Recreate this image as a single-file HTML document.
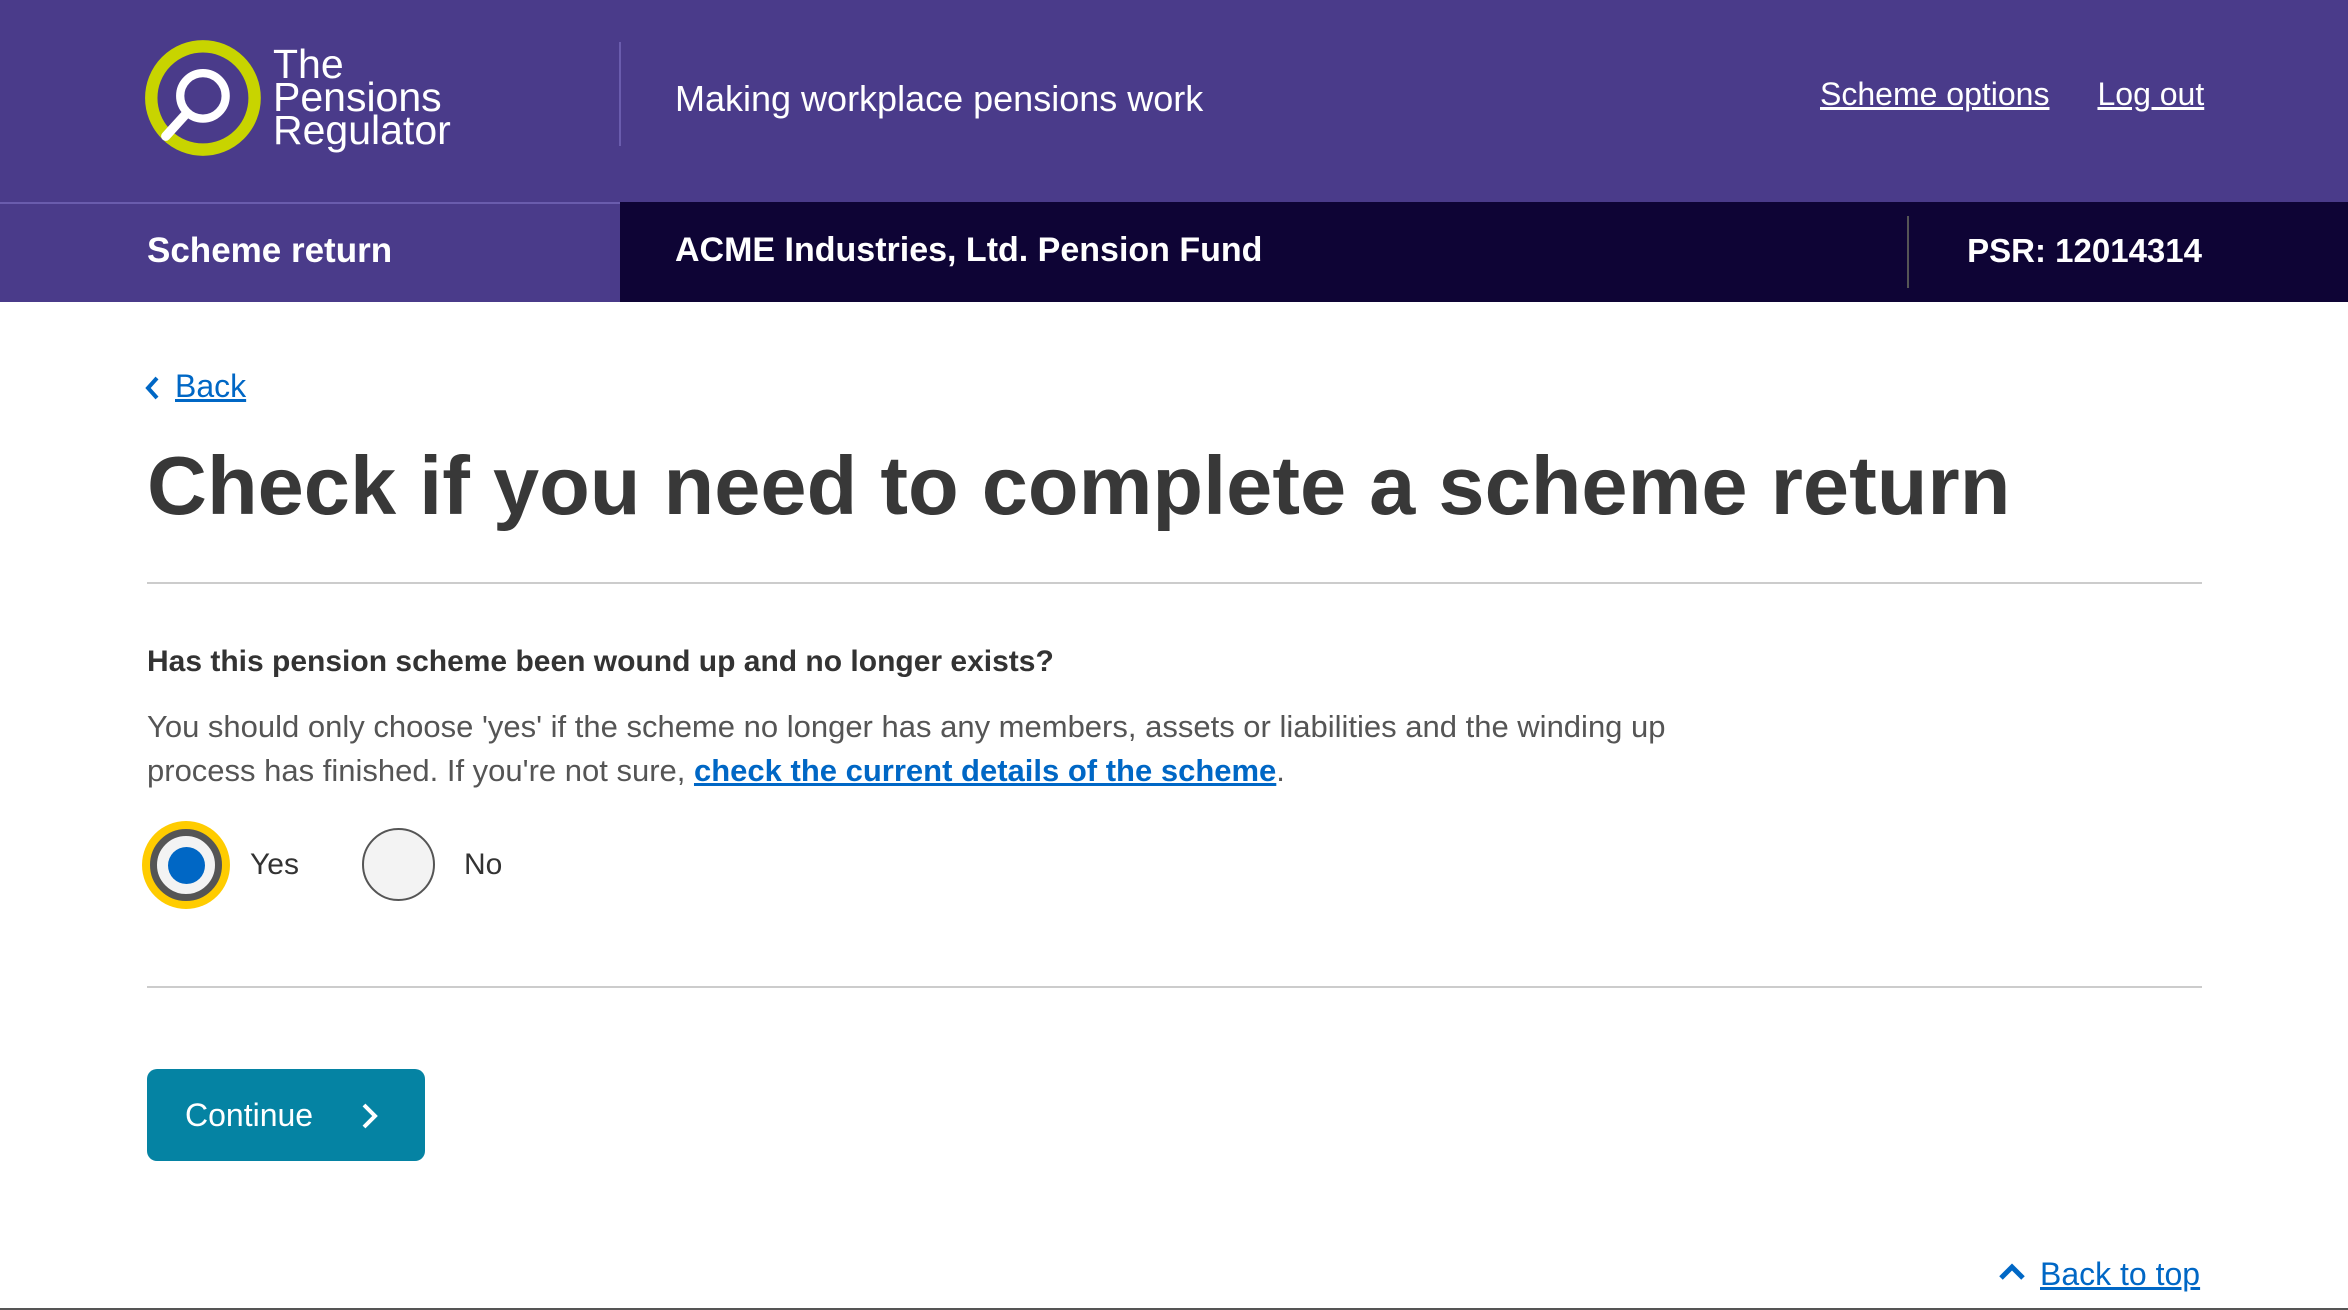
<!DOCTYPE html>
<html><head><meta charset="utf-8"><style>
*{margin:0;padding:0;box-sizing:border-box}
body{width:2348px;height:1310px;position:relative;overflow:hidden;background:#fff;font-family:"Liberation Sans",sans-serif;color:#333}
.a{position:absolute;white-space:nowrap}
a{color:#0067c5;text-decoration:underline}
</style></head><body>
<div class="a" style="left:0;top:0;width:2348px;height:202px;background:#4a3b8a"></div>
<div class="a" style="left:0;top:202px;width:620px;height:100px;background:#4a3b8a;border-top:2px solid #6a5cad"></div>
<div class="a" style="left:620px;top:202px;width:1728px;height:100px;background:#0e0435"></div>
<div class="a" style="left:619px;top:42px;width:2px;height:104px;background:#6a5cad"></div>
<svg class="a" style="left:143px;top:37px" width="124" height="124" viewBox="0 0 120 120">
<circle cx="58" cy="59" r="50" fill="none" stroke="#c8d400" stroke-width="12"/>
<circle cx="58" cy="57" r="22" fill="none" stroke="#fff" stroke-width="8"/>
<line x1="42" y1="74" x2="22" y2="96" stroke="#fff" stroke-width="9" stroke-linecap="round"/>
</svg>
<div class="a" style="left:273px;top:48px;color:#fff;font-size:41px;line-height:33px">The<br>Pensions<br>Regulator</div>
<div class="a" style="left:675px;top:78px;color:#fff;font-size:36px">Making workplace pensions work</div>
<div class="a" style="left:1820px;top:76px;color:#fff;font-size:32px"><span style="text-decoration:underline">Scheme options</span><span style="text-decoration:underline;margin-left:48px">Log out</span></div>
<div class="a" style="left:147px;top:231px;color:#fff;font-size:35px;font-weight:bold">Scheme return</div>
<div class="a" style="left:675px;top:231px;color:#fff;font-size:34px;font-weight:bold">ACME Industries, Ltd. Pension Fund</div>
<div class="a" style="left:1907px;top:216px;width:2px;height:72px;background:#555"></div>
<div class="a" style="right:146px;top:232px;color:#fff;font-size:33px;font-weight:bold">PSR: 12014314</div>
<svg class="a" style="left:143px;top:375px" width="20" height="26"><path d="M14 3 L5 13 L14 23" fill="none" stroke="#0067c5" stroke-width="4"/></svg>
<div class="a" style="left:175px;top:368px;font-size:32px"><a>Back</a></div>
<div class="a" style="left:147px;top:438px;font-size:83px;font-weight:bold;color:#383838">Check if you need to complete a scheme return</div>
<div class="a" style="left:147px;top:582px;width:2055px;height:2px;background:#ccc"></div>
<div class="a" style="left:147px;top:645px;font-size:30px;font-weight:bold">Has this pension scheme been wound up and no longer exists?</div>
<div class="a" style="left:147px;top:705px;font-size:31px;line-height:44px;color:#555">You should only choose 'yes' if the scheme no longer has any members, assets or liabilities and the winding up<br>process has finished. If you're not sure, <a style="font-weight:bold">check the current details of the scheme</a>.</div>
<div class="a" style="left:142px;top:821px;width:88px;height:88px;border-radius:50%;background:#ffcc00"></div>
<div class="a" style="left:150px;top:829px;width:72px;height:72px;border-radius:50%;background:#f3f3f3;border:7px solid #555"></div>
<div class="a" style="left:168px;top:847px;width:37px;height:37px;border-radius:50%;background:#0067c5"></div>
<div class="a" style="left:250px;top:848px;font-size:30px">Yes</div>
<div class="a" style="left:362px;top:828px;width:73px;height:73px;border-radius:50%;background:#f3f3f3;border:2px solid #555"></div>
<div class="a" style="left:464px;top:848px;font-size:30px">No</div>
<div class="a" style="left:147px;top:986px;width:2055px;height:2px;background:#ccc"></div>
<div class="a" style="left:147px;top:1069px;width:278px;height:92px;border-radius:10px;background:#0583a3"></div>
<div class="a" style="left:185px;top:1097px;font-size:32px;color:#fff">Continue</div>
<svg class="a" style="left:358px;top:1101px" width="24" height="30"><path d="M6 4 L17 15 L6 26" fill="none" stroke="#fff" stroke-width="4"/></svg>
<svg class="a" style="left:1998px;top:1262px" width="30" height="20"><path d="M3 16 L14 5 L25 16" fill="none" stroke="#0067c5" stroke-width="5"/></svg>
<div class="a" style="left:2040px;top:1256px;font-size:32px"><a>Back to top</a></div>
<div class="a" style="left:0;top:1308px;width:2348px;height:2px;background:#555"></div>
</body></html>
